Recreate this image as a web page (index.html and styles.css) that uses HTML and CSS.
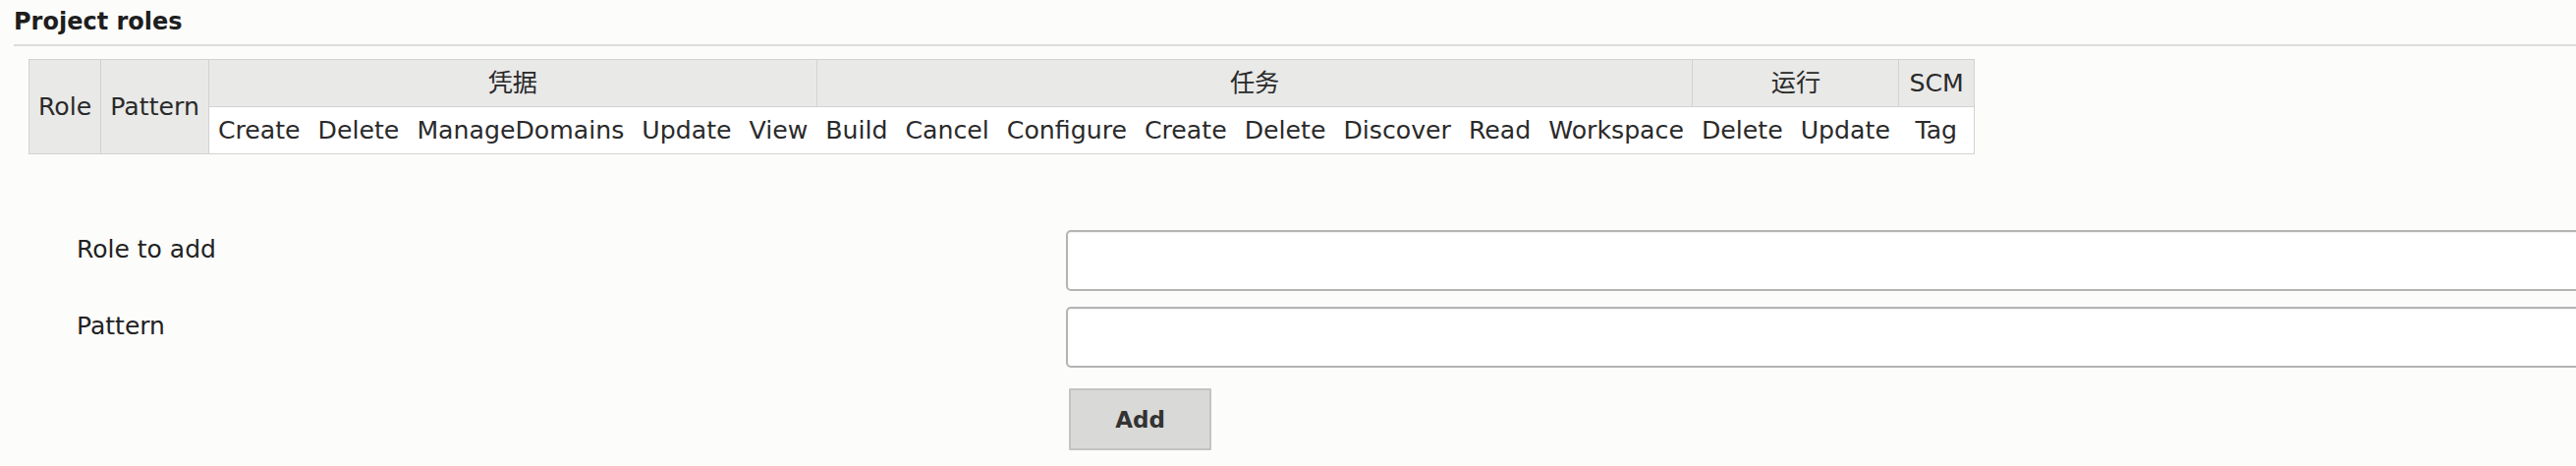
FILE: index.html
```html
<!DOCTYPE html>
<html lang="en">
<head>
<meta charset="utf-8">
<title>Project roles</title>
<link rel="stylesheet" href="styles.css">
</head>
<body>
<div class="page">
  <h2 class="title">Project roles</h2>
  <div class="rule"></div>
  <table class="roles">
    <thead>
      <tr class="groups">
        <th rowspan="2" class="fixed">Role</th>
        <th rowspan="2" class="fixed">Pattern</th>
        <th colspan="5">凭据</th>
        <th colspan="8">任务</th>
        <th colspan="2">运行</th>
        <th class="scm">SCM</th>
      </tr>
      <tr class="perms">
        <th>Create</th><th>Delete</th><th>ManageDomains</th><th>Update</th><th>View</th>
        <th>Build</th><th>Cancel</th><th>Configure</th><th>Create</th><th>Delete</th><th>Discover</th><th>Read</th><th>Workspace</th>
        <th>Delete</th><th>Update</th>
        <th>Tag</th>
      </tr>
    </thead>
  </table>
  <form class="add-form">
    <label class="label" for="role-name">Role to add</label>
    <div class="field"><input id="role-name" class="text-input" type="text"></div>
    <label class="label" for="role-pattern">Pattern</label>
    <div class="field"><input id="role-pattern" class="text-input" type="text"></div>
    <div></div>
    <div class="actions"><button type="button" class="btn">Add</button></div>
  </form>
</div>
</body>
</html>
```
FILE: styles.css
```css
html, body {
  margin: 0;
  padding: 0;
  overflow: hidden;
  background: #fcfcfb;
}

body {
  font-family: "DejaVu Sans", "Noto Sans CJK SC", sans-serif;
  color: #222;
}

.page {
  padding: 8px 0 0 14px;
}

.title {
  margin: 0;
  font-size: 24px;
  line-height: 28px;
  font-weight: bold;
  color: #1e1e1e;
}

.rule {
  margin-top: 9px;
  height: 2px;
  background: #dcdcdc;
}

.roles {
  margin: 13px 0 0 15px;
  border-collapse: collapse;
  border: 1px solid #d2d2d2;
  font-size: 25.2px;
}

.roles th {
  font-weight: normal;
  line-height: 29px;
  padding: 9px 9px;
  text-align: center;
  white-space: nowrap;
  color: #2a2a2a;
}

.groups th {
  background: #e9e9e8;
  border: 1px solid #d2d2d2;
}

.groups .scm {
  padding: 9px 10px;
}

.perms th {
  background: #ffffff;
  border-top: 1px solid #d2d2d2;
  border-bottom: 1px solid #d2d2d2;
}

.add-form {
  margin-top: 77px;
  padding-left: 64px;
  display: grid;
  grid-template-columns: 1007px 1fr;
  row-gap: 16px;
}

.label {
  font-size: 25px;
  line-height: 29px;
  padding-top: 5px;
  color: #222;
}

.field {
  min-width: 0;
}

.text-input {
  display: block;
  box-sizing: border-box;
  width: calc(100% + 60px);
  height: 62px;
  margin: 0;
  border: 2px solid #b4b4b4;
  border-radius: 5px;
  background: #ffffff;
  box-shadow: inset 0 1px 2px rgba(0, 0, 0, 0.06);
  font-size: 25px;
}

.actions {
  padding: 5px 0 0 3px;
}

.btn {
  box-sizing: border-box;
  width: 145px;
  height: 63px;
  background: #d9d9d8;
  border: 2px solid #c3c3c3;
  border-radius: 1px;
  font-family: "DejaVu Sans", sans-serif;
  font-size: 23px;
  font-weight: bold;
  color: #333;
  padding: 0;
}
```
